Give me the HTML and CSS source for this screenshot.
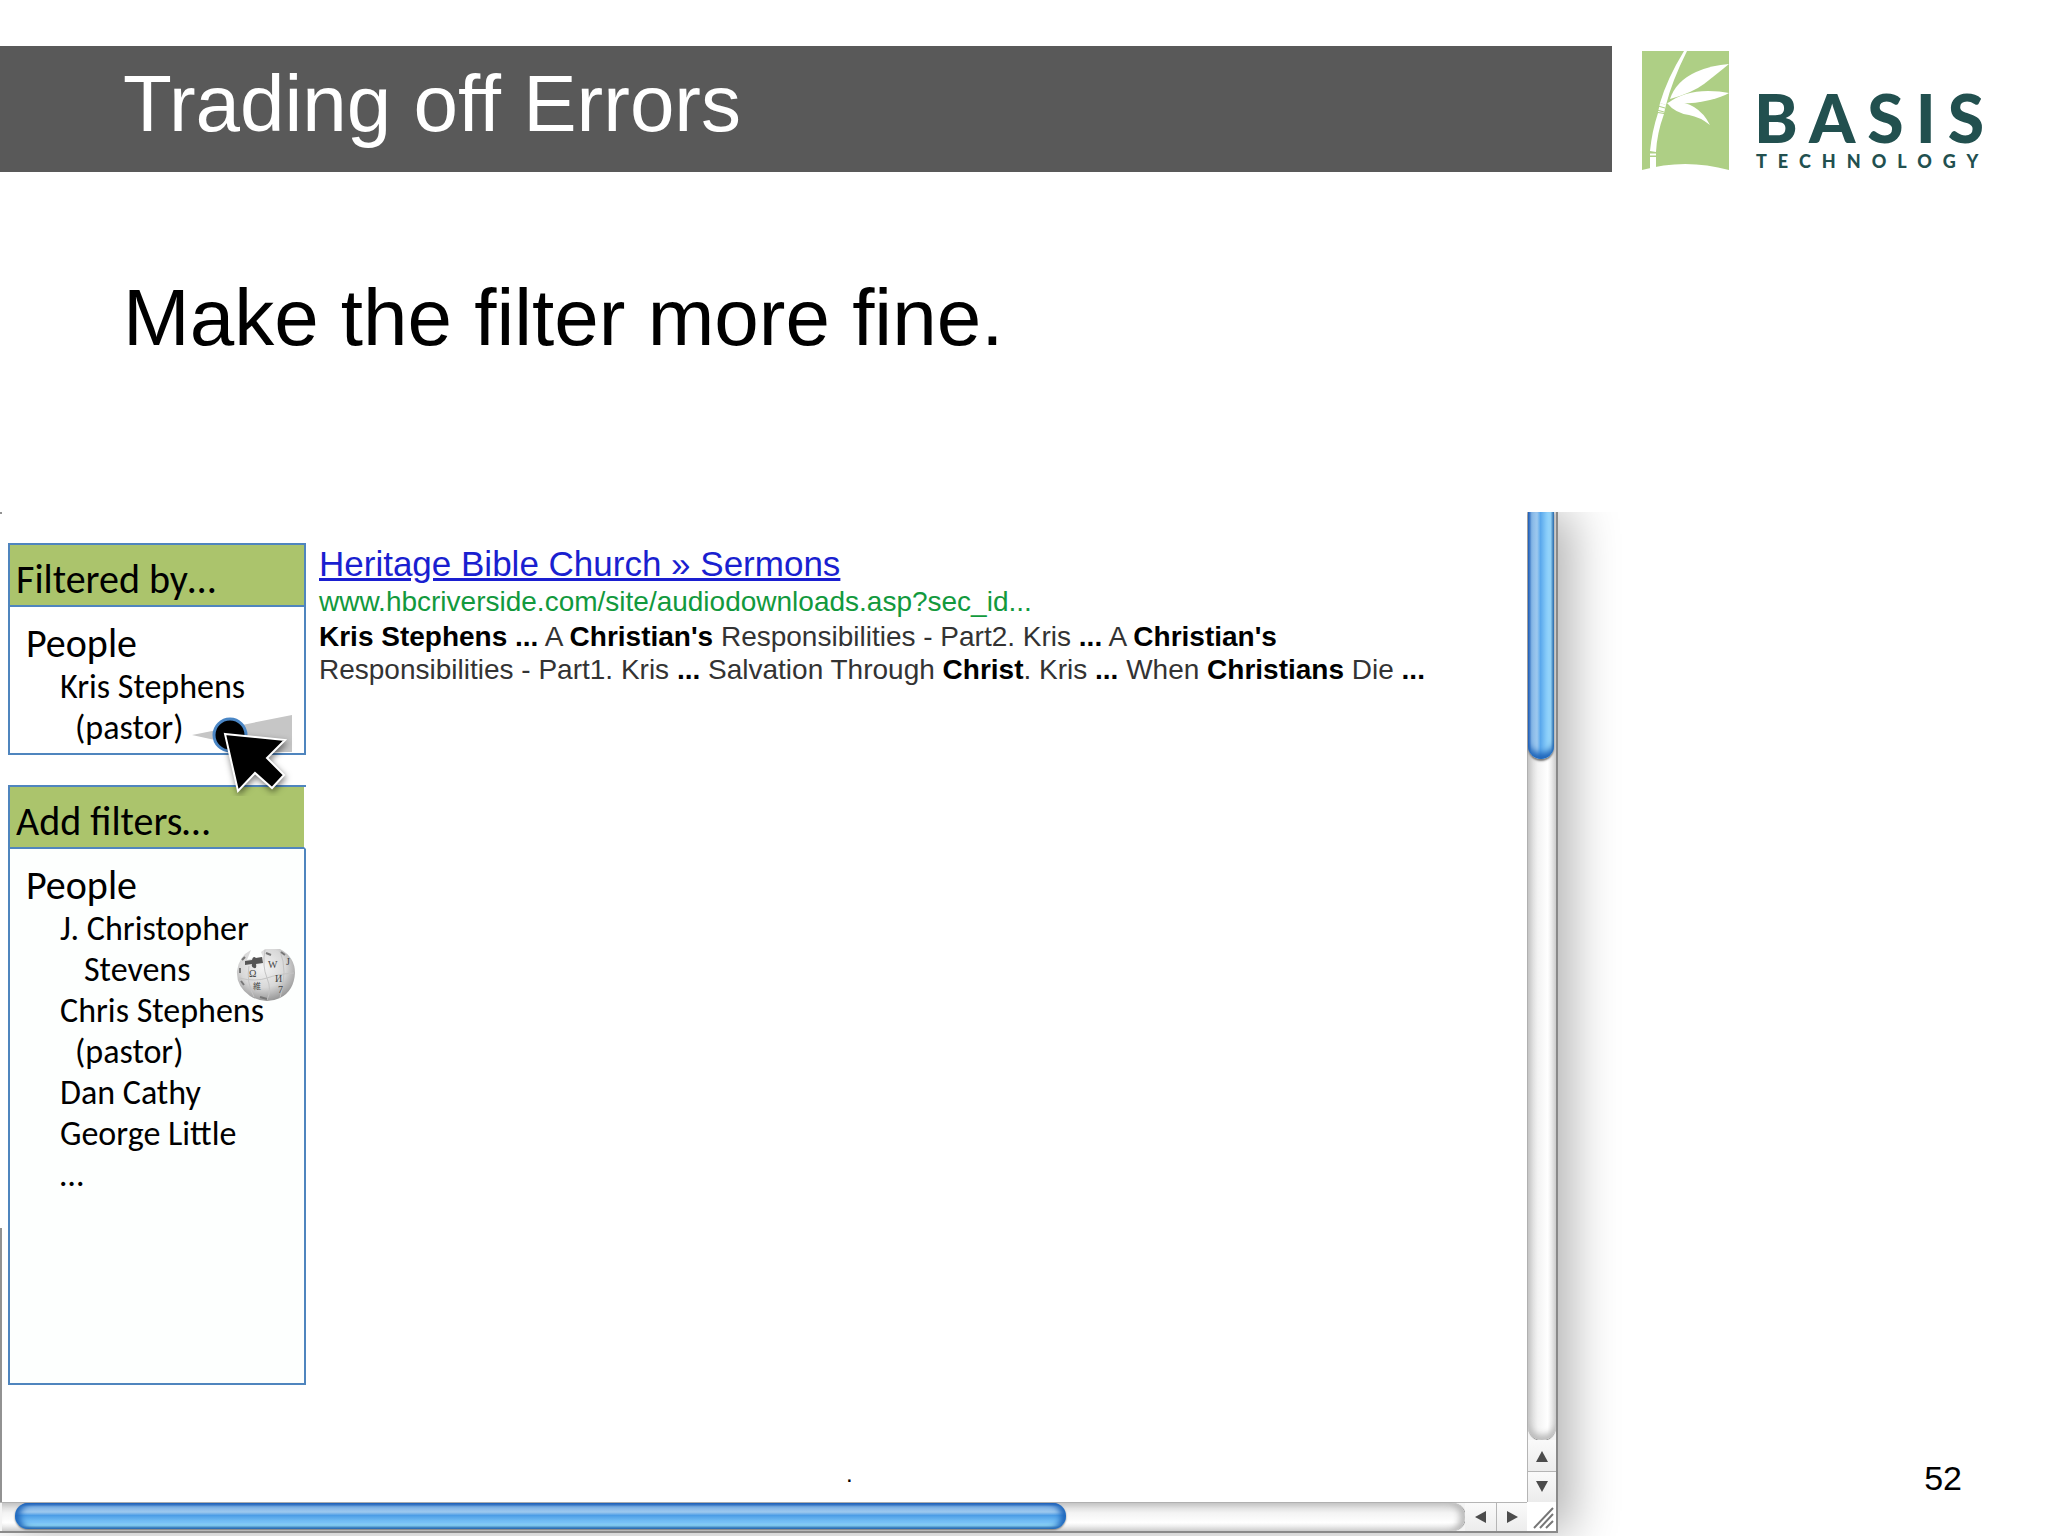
FILE: index.html
```html
<!DOCTYPE html>
<html lang="en">
  <head>
    <meta charset="utf-8">
    <title>Trading off Errors</title>
    <link rel="stylesheet" href="styles.css">
  </head>
  <body>
    <header class="slide-header">
      <h1 class="slide-title">Trading off Errors</h1>
      <div class="logo">
        <svg class="logo-mark" viewBox="0 0 87 120" aria-hidden="true">
          <path fill="#aecf85" d="M0 0H87V119Q43 107 0 119Z"></path>
          <path fill="#fff" d="M42 0h3Q30 30 24 54l-6-2Q25 28 42 0z"></path>
          <path fill="#fff" d="M18 52l6 2-2 8-6-1zM16 62l6 1Q15 82 14 101l-6-1Q10 80 16 62zM8 102h6v3h-6zM8 106h6v11h-6z"></path>
          <path fill="#fff" d="M28 48Q34 30 54 21 70 14 87 13 76 22 62 33 50 42 28 48z"></path>
          <path fill="#fff" d="M26 52Q42 40 66 40 78 40 87 42 80 46 68 49 48 54 26 52z"></path>
          <path fill="#fff" d="M25 52Q40 49 52 56 62 62 68 74 58 66 47 64 33 62 25 52z"></path>
          <path fill="none" stroke="#aecf85" stroke-width="1" d="M16 55l7 2M15 59l7 2M7 102h8M7 105h8"></path>
        </svg>
        <div class="logo-text">
          <span class="logo-name">BASIS</span>
          <span class="logo-tagline">TECHNOLOGY</span>
        </div>
      </div>
    </header>

    <p class="lead">Make the filter more fine.</p>

    <main class="stage">
      <section class="window">
        <div class="viewport">
          <aside class="sidebar">
            <section class="panel active-filters">
              <h2 class="panel-title">Filtered by…</h2>
              <div class="panel-body">
                <h3 class="group">People</h3>
                <ul class="names">
                  <li>Kris Stephens<span class="second">(pastor)</span></li>
                </ul>
              </div>
              <svg class="slider-art" viewBox="0 0 110 90" aria-hidden="true">
                <path fill="#c6c6c6" d="M2 29L102 9V46H80z"></path>
                <circle cx="40" cy="29" r="16" fill="#000" stroke="#4a86c5" stroke-width="3"></circle>
                <path class="pointer" fill="#000" stroke="#fff" stroke-width="2" d="M35 28L95 34 77 52 94 69 82 82 65 67 48 85z"></path>
              </svg>
            </section>

            <section class="panel add-filters">
              <h2 class="panel-title">Add filters…</h2>
              <div class="panel-body">
                <h3 class="group">People</h3>
                <ul class="names">
                  <li>J. Christopher<span class="second deep">Stevens</span></li>
                  <li>Chris Stephens<span class="second">(pastor)</span></li>
                  <li>Dan Cathy</li>
                  <li>George Little</li>
                  <li>…</li>
                </ul>
              </div>
              <svg class="globe" viewBox="0 0 60 54" aria-hidden="true">
                <defs>
                  <radialGradient id="ball" cx="45%" cy="35%" r="65%">
                    <stop offset="0" stop-color="#f4f4f4"></stop>
                    <stop offset="0.6" stop-color="#d8d8d8"></stop>
                    <stop offset="1" stop-color="#989898"></stop>
                  </radialGradient>
                </defs>
                <path fill="url(#ball)" d="M15 2L11 12 18 10 27 9 25 4 29 1 44 1Q59 9 59 25 58 43 44 50 29 57 14 48 0 38 1 23 3 8 15 2z"></path>
                <path fill="#555" d="M9 13l7-1q1-5 4-2l6-1 1 6-7 1q1 5-2 4t-2-4l-7 1z"></path>
                <path fill="none" stroke="#c4c4c4" stroke-width="1" d="M29 2Q26 18 31 30T31 52M3 30Q20 34 31 30T58 25M13 18Q10 34 18 49M44 3Q52 22 44 50"></path>
                <g class="globe-letters">
                  <text x="13" y="29">Ω</text>
                  <text x="32" y="20">W</text>
                  <text x="39" y="34">И</text>
                  <text x="17" y="41" class="small">維</text>
                  <text x="50" y="17">J</text>
                  <text x="42" y="45">7</text>
                </g>
                <path fill="none" stroke="#777" stroke-width="2" d="M4 20v5M5 33l3 4M6 12l3-3M30 5l5 2M45 4l4 3M24 49l7 2"></path>
              </svg>
            </section>
          </aside>

          <article class="result">
            <a class="result-title" href="#">Heritage Bible Church » Sermons</a>
            <cite class="result-url">www.hbcriverside.com/site/audiodownloads.asp?sec_id...</cite>
            <p class="snippet">
              <b>Kris Stephens ...</b> A <b>Christian's</b> Responsibilities - Part2. Kris <b>...</b> A <b>Christian's</b><br>
              Responsibilities - Part1. Kris <b>...</b> Salvation Through <b>Christ</b>. Kris <b>...</b> When <b>Christians</b> Die <b>...</b>
            </p>
          </article>
          <span class="speck">.</span>
        </div>

        <div class="scrollbar vertical">
          <div class="track"><div class="thumb"></div></div>
          <button class="arrow" aria-label="Scroll up"><svg viewBox="0 0 12 12"><path d="M6 1l6 11H0z"></path></svg></button>
          <button class="arrow" aria-label="Scroll down"><svg viewBox="0 0 12 12"><path d="M0 0h12L6 11z"></path></svg></button>
        </div>
        <div class="scrollbar horizontal">
          <div class="track"><div class="thumb"></div></div>
          <button class="arrow" aria-label="Scroll left"><svg viewBox="0 0 12 12"><path d="M0 6L11 0v12z"></path></svg></button>
          <button class="arrow" aria-label="Scroll right"><svg viewBox="0 0 12 12"><path d="M12 6L1 0v12z"></path></svg></button>
        </div>
        <svg class="grip" viewBox="0 0 28 28" aria-hidden="true">
          <path d="M7 26L26 6M13 26L26 12M19 26L26 19"></path>
        </svg>
      </section>
      <span class="page-number">52</span>
    </main>
  </body>
</html>
```
FILE: styles.css
```css
* {
  margin: 0;
  padding: 0;
  box-sizing: border-box;
}

body {
  display: flex;
  flex-direction: column;
  min-height: 100vh;
  background: #fff;
  color: #000;
  font-family: "Liberation Sans", Arial, sans-serif;
}

/* header */
.slide-header {
  display: flex;
  margin-top: 46px;
}

.slide-title {
  flex: 1;
  height: 126px;
  padding-left: 123px;
  background: #595959;
  color: #fff;
  font-size: 80px;
  font-weight: 400;
  line-height: 116px;
}

.logo {
  display: flex;
  width: 436px;
  padding: 5px 0 0 30px;
  color: #22504f;
  font-family: Lato, sans-serif;
}

.logo-mark {
  width: 87px;
  height: 120px;
}

.logo-text {
  display: flex;
  flex-direction: column;
  padding: 34px 0 0 25px;
  white-space: nowrap;
}

.logo-name {
  font-size: 66px;
  font-weight: 900;
  line-height: 66px;
  letter-spacing: 12px;
}

.logo-tagline {
  padding: 1px 0 0 2px;
  font-size: 18px;
  font-weight: 900;
  line-height: 18px;
  letter-spacing: 11px;
}

.lead {
  padding: 100px 123px 0;
  font-size: 80px;
  line-height: 92px;
}

/* browser window */
.stage {
  flex: 1;
  display: flex;
  margin-top: 148px;
  overflow: hidden;
}

.window {
  flex: 1;
  display: grid;
  grid-template-columns: 1fr 29px;
  grid-template-rows: 1fr 29px;
  margin-bottom: 3px;
  border-right: 2px solid #8a8a8a;
  border-bottom: 2px solid #8a8a8a;
  box-shadow: 14px 0 44px rgba(0, 0, 0, 0.3);
}

.viewport {
  position: relative;
  display: flex;
  gap: 13px;
  padding: 31px 0 0 8px;
  background: #fff;
}

/* what is left of the window frame on the left side */
.viewport::before,
.viewport::after {
  content: "";
  position: absolute;
  left: 0;
  width: 2px;
  background: #929292;
}

.viewport::before {
  bottom: 0;
  height: 274px;
}

.viewport::after {
  top: 0;
  height: 2px;
}

.sidebar {
  flex: none;
  width: 298px;
  font-family: Carlito, Lato, sans-serif;
}

.panel {
  position: relative;
  border: 2px solid #4f85be;
}

.panel-title {
  height: 62px;
  padding-left: 6px;
  border-bottom: 2px solid #4f85be;
  background: #abc46c;
  font-size: 40px;
  font-weight: 400;
  line-height: 70px;
  white-space: nowrap;
}

.panel-body {
  padding: 15px 0 0 16px;
  white-space: nowrap;
}

.active-filters {
  height: 212px;
}

.add-filters {
  height: 600px;
  margin-top: 30px;
  background: #fdfffe;
}

.add-filters .panel-title {
  margin-right: -2px;
  border-right: 2px solid #fff;
}

.group {
  font-size: 40px;
  font-weight: 400;
  line-height: 44px;
}

.names {
  padding-left: 34px;
  list-style: none;
  font-size: 34px;
  line-height: 41px;
}

.second {
  display: block;
  padding-left: 15px;
}

.second.deep {
  padding-left: 24px;
}

/* slider wedge, knob and pointer lie over both panels */
.slider-art {
  position: absolute;
  z-index: 1;
  left: 180px;
  top: 161px;
  width: 110px;
  height: 90px;
}

.pointer {
  filter: drop-shadow(1px 3px 3px rgba(0, 0, 0, 0.5));
}

.globe {
  position: absolute;
  right: 8px;
  top: 161px;
  width: 60px;
  height: 54px;
}

.globe-letters {
  fill: #444;
  font: 10px "Liberation Serif", serif;
}

.globe-letters .small {
  font: 8px "Noto Sans CJK JP", sans-serif;
}

/* search result */
.result {
  padding-top: 1px;
  white-space: nowrap;
}

.result-title {
  display: block;
  color: #1a1fd0;
  font-size: 35px;
  line-height: 40px;
}

.result-url {
  display: block;
  color: #12993d;
  font-size: 28px;
  font-style: normal;
  line-height: 36px;
}

.snippet {
  color: #333;
  font-size: 28px;
  line-height: 33px;
}

.snippet b {
  color: #000;
}

.speck {
  position: absolute;
  left: 55.4%;
  bottom: 14px;
  font-size: 24px;
}

/* scrollbars */
.scrollbar {
  display: flex;
  background: #f4f4f4;
}

.vertical {
  flex-direction: column;
  border-left: 1px solid #b5b5b5;
}

.horizontal {
  border-top: 1px solid #b5b5b5;
  padding-left: 2px;
}

.track {
  flex: 1;
}

.vertical .track {
  border-radius: 0 0 14px 14px;
  background: linear-gradient(90deg, #cfcfcf, #f3f3f3 35%, #fff 70%, #ddd);
  box-shadow: inset 0 -5px 6px #bbb, 0 1px 1px #888;
}

.horizontal .track {
  padding-left: 13px;
  border-radius: 0 14px 14px 0;
  background: linear-gradient(#cfcfcf, #f3f3f3 35%, #fff 70%, #ddd);
  box-shadow: inset -5px 0 6px #bbb, 1px 0 1px #888;
}

.vertical .thumb {
  width: 26px;
  height: 26.6%;
  border-radius: 0 0 13px 13px;
  background: linear-gradient(90deg, #1d55b4, #8dbdea 14%, #9cc8ee 35%, #5aa8ec 48%, #8fd2fb 75%, #a5e3ff 88%, #34709f);
  box-shadow: inset 0 -6px 6px #1f66bb, 0 2px 2px #777;
}

.horizontal .thumb {
  width: 72.5%;
  height: 26px;
  border-radius: 13px;
  background: linear-gradient(#1d55b4, #8dbdea 14%, #9cc8ee 35%, #4c9de6 48%, #7cc6f8 75%, #a5ecff 88%, #34709f);
  box-shadow: inset 5px 0 6px #1f66bb, inset -5px 0 6px #1f66bb, 0 1px 2px #777;
}

.arrow {
  display: flex;
  align-items: center;
  justify-content: center;
  width: 31px;
  height: 31px;
  border: 0;
  background: linear-gradient(#fafafa, #ececec);
}

.vertical .arrow {
  width: 28px;
}

.horizontal .arrow {
  height: 28px;
}

.arrow + .arrow {
  border: 0 solid #b5b5b5;
}

.vertical .arrow + .arrow {
  border-top-width: 1px;
}

.horizontal .arrow + .arrow {
  border-left-width: 1px;
}

.arrow svg {
  width: 12px;
  height: 12px;
  fill: #4c4c4c;
}

.grip {
  width: 28px;
  height: 28px;
  fill: none;
  stroke: #777;
  stroke-width: 2;
}

.page-number {
  align-self: flex-end;
  width: 490px;
  padding: 0 86px 38px 0;
  font-size: 34px;
  line-height: 40px;
  text-align: right;
}
```
